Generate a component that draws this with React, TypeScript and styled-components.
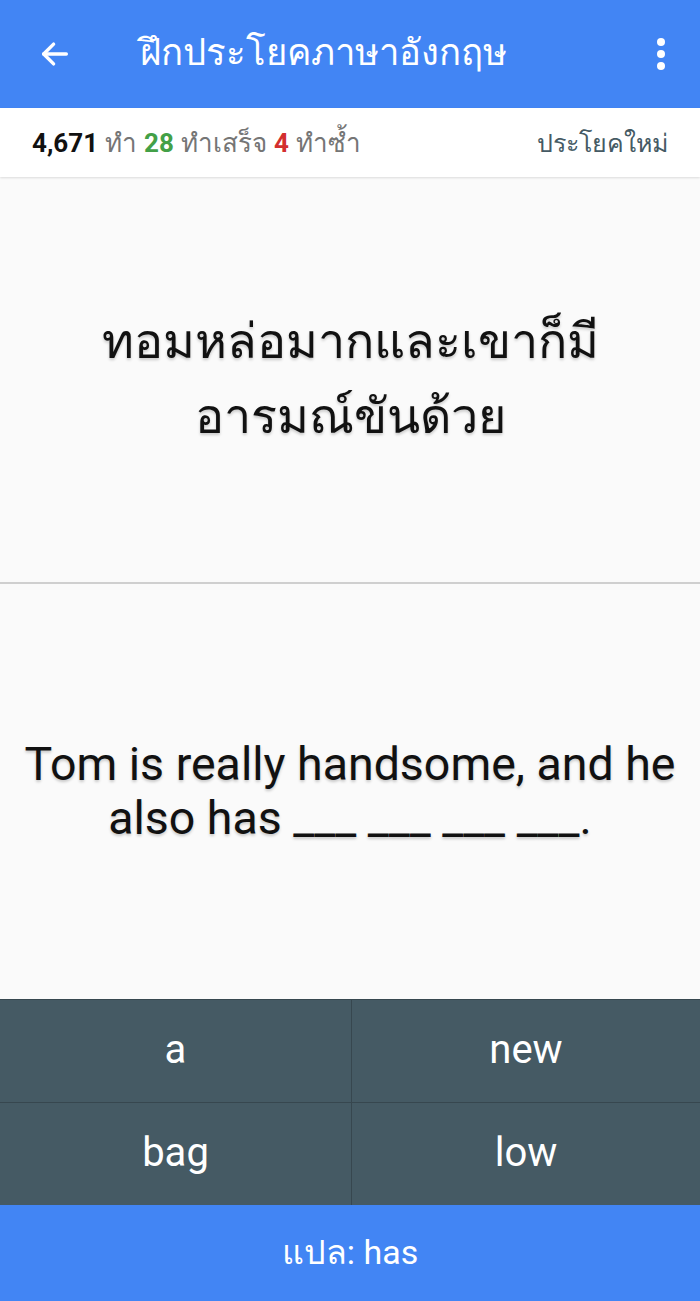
import styled, { createGlobalStyle } from "styled-components";

const GlobalStyle = createGlobalStyle`
  html, body {
    margin: 0;
    padding: 0;
    background: #fafafa;
  }
  body {
    font-family: Roboto, "Noto Sans", "DejaVu Sans", sans-serif;
  }
`;

const Screen = styled.div`
  width: 700px;
  height: 1301px;
  display: flex;
  flex-direction: column;
  background: #fafafa;
  overflow: hidden;
`;

const AppBar = styled.header`
  height: 108px;
  flex: none;
  background: #4285f4;
  display: flex;
  align-items: center;
  padding: 0 20px 0 36px;
  color: #fff;
`;

const IconButton = styled.div`
  width: 38px;
  height: 38px;
  display: flex;
  align-items: center;
  justify-content: center;
  flex: none;
`;

const Title = styled.h1`
  flex: 1;
  margin: 0 0 0 66px;
  font-size: 36.5px;
  font-weight: 400;
  line-height: 1;
  padding-bottom: 2px;
`;

const StatsBar = styled.div`
  height: 69px;
  flex: none;
  background: #fff;
  display: flex;
  align-items: center;
  justify-content: space-between;
  padding: 0 32px 0 32px;
  box-shadow: 0 1px 2px rgba(0, 0, 0, 0.12);
  position: relative;
  z-index: 1;
`;

const Stats = styled.div`
  font-size: 26px;
  color: #757575;
  display: flex;
  gap: 7px;
  align-items: baseline;
`;

const Num = styled.span<{ $tone: string }>`
  font-weight: 700;
  color: ${p => p.$tone};
`;

const NewLink = styled.span`
  font-size: 25px;
  color: #455a64;
`;

const Card = styled.section<{ $grow: number }>`
  flex: ${p => p.$grow};
  display: flex;
  align-items: center;
  justify-content: center;
  text-align: center;
  padding: 0 10px;
`;

const Divider = styled.hr`
  margin: 0;
  border: none;
  height: 2px;
  background: #cfcfcf;
  flex: none;
`;

const ThaiSentence = styled.p`
  margin: 0;
  font-size: 48.5px;
  line-height: 75px;
  color: #111;
  text-shadow: 0 2px 3px rgba(0, 0, 0, 0.2);
`;

const EnglishSentence = styled.p`
  margin: 0;
  font-size: 46.5px;
  line-height: 54px;
  color: #111;
  text-shadow: 0 2px 3px rgba(0, 0, 0, 0.2);
`;

const ChoiceGrid = styled.div`
  flex: none;
  display: grid;
  grid-template-columns: 351px 1fr;
  grid-template-rows: 102px 102px;
  background: #37474f;
  gap: 1px;
  border-top: 1px solid #37474f;
`;

const Choice = styled.button`
  border: none;
  background: #455a64;
  color: #fff;
  font-family: inherit;
  font-size: 40px;
  padding: 0 0 4px;
  cursor: pointer;
`;

const Footer = styled.div`
  flex: none;
  height: 94px;
  background: #4285f4;
  color: #fff;
  font-size: 34px;
  display: flex;
  align-items: center;
  justify-content: center;
  padding-bottom: 2px;
`;

const choices = ["a", "new", "bag", "low"];

export default function App() {
  return (
    <Screen>
      <GlobalStyle />
      <AppBar>
        <IconButton>
          <svg width="34" height="34" viewBox="0 0 24 24" fill="none" stroke="#fff" strokeWidth="2.4" strokeLinecap="round" strokeLinejoin="round">
            <path d="M20 12H4" />
            <path d="M11 5l-7 7 7 7" />
          </svg>
        </IconButton>
        <Title>ฝึกประโยคภาษาอังกฤษ</Title>
        <IconButton>
          <svg width="12" height="36" viewBox="0 0 12 36" fill="#fff">
            <circle cx="6" cy="6" r="4" />
            <circle cx="6" cy="18" r="4" />
            <circle cx="6" cy="30" r="4" />
          </svg>
        </IconButton>
      </AppBar>
      <StatsBar>
        <Stats>
          <Num $tone="#111">4,671</Num>
          <span>ทำ</span>
          <Num $tone="#43a047">28</Num>
          <span>ทำเสร็จ</span>
          <Num $tone="#d32f2f">4</Num>
          <span>ทำซ้ำ</span>
        </Stats>
        <NewLink>ประโยคใหม่</NewLink>
      </StatsBar>
      <Card $grow={405}>
        <ThaiSentence>
          ทอมหล่อมากและเขาก็มี
          <br />
          อารมณ์ขันด้วย
        </ThaiSentence>
      </Card>
      <Divider />
      <Card $grow={416}>
        <EnglishSentence>
          Tom is really handsome, and he
          <br />
          also has ___ ___ ___ ___.
        </EnglishSentence>
      </Card>
      <ChoiceGrid>
        {choices.map(c => (
          <Choice key={c}>{c}</Choice>
        ))}
      </ChoiceGrid>
      <Footer>แปล: has</Footer>
    </Screen>
  );
}
